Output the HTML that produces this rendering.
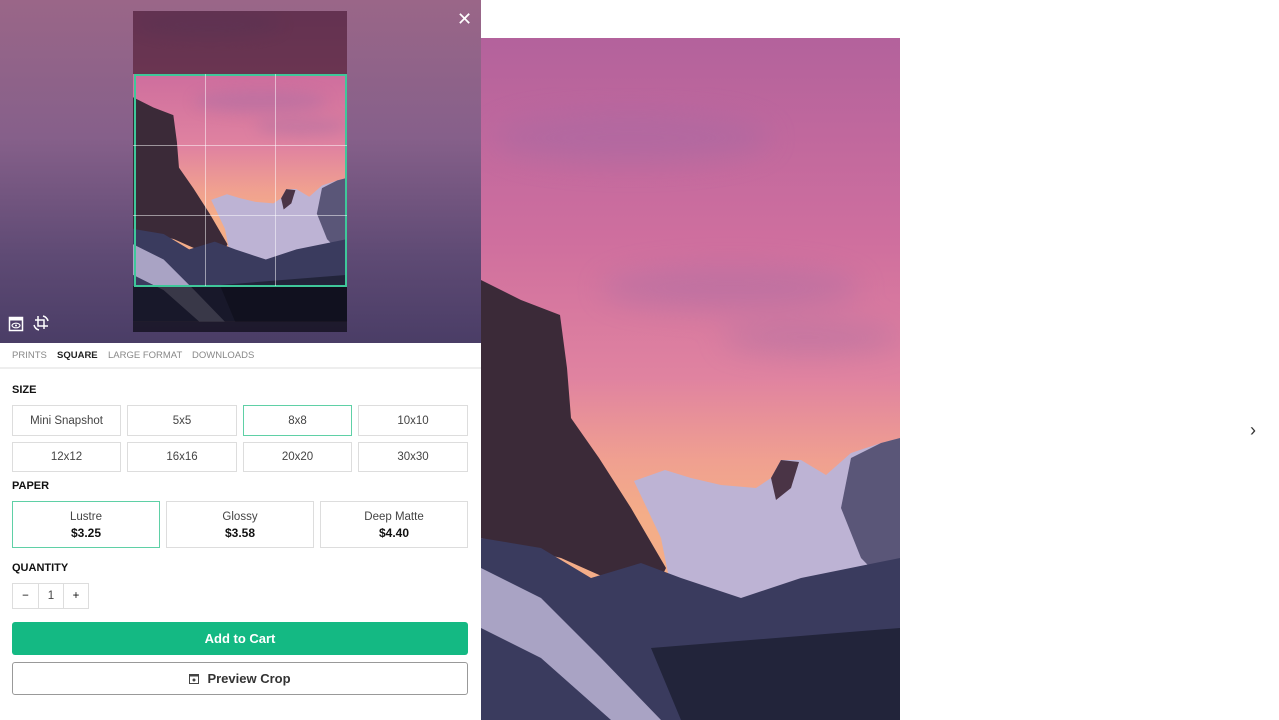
<!DOCTYPE html>
<html><head><meta charset="utf-8"><style>
*{box-sizing:border-box;margin:0;padding:0}
body{width:1279px;height:720px;overflow:hidden;background:#fff;font-family:"Liberation Sans",sans-serif;position:relative;color:#222}
.top{position:absolute;left:0;top:0;width:481px;height:343px;background:linear-gradient(180deg,#9a6688 0%,#86608a 40%,#5e4a74 75%,#4a3d66 100%)}
.thumb{position:absolute;left:133px;top:11px;width:214px;height:321px;overflow:hidden}
.photo{position:absolute;left:481px;top:38px;width:419px;height:682px}
.tabs{position:absolute;left:0;top:343px;width:481px;height:26px;border-bottom:2px solid #eee;font-size:9.5px;color:#888}
.tabs span{position:absolute;top:7px}
.lbl{position:absolute;left:12px;font-size:11px;font-weight:bold;color:#111}
.b{position:absolute;border:1px solid #ddd;background:#fff;font-size:11.5px;color:#444;display:flex;align-items:center;justify-content:center;flex-direction:column;line-height:16px}
.b strong{color:#111;font-size:12px}
</style></head><body>
<svg width="0" height="0" style="position:absolute">
<defs>
<linearGradient id="sky" x1="0" y1="0" x2="0" y2="1">
<stop offset="0" stop-color="#b3629c"/><stop offset=".3" stop-color="#cf6f9e"/><stop offset=".5" stop-color="#e083a0"/><stop offset=".62" stop-color="#f0a090"/><stop offset=".7" stop-color="#f4ad88"/></linearGradient>
<filter id="bl"><feGaussianBlur stdDeviation="14"/></filter>
<symbol id="scene" viewBox="0 0 419 682" preserveAspectRatio="none">
<rect width="419" height="682" fill="url(#sky)"/>
<g filter="url(#bl)" fill="#9a6aa6" opacity=".35">
<ellipse cx="250" cy="250" rx="130" ry="22"/><ellipse cx="330" cy="300" rx="90" ry="16"/><ellipse cx="150" cy="100" rx="140" ry="26"/>
</g>
<path d="M0 242 L40 262 L79 277 L86 330 L90 380 L118 420 L150 470 L185 530 L170 560 L80 520 L0 500Z" fill="#3b2a38"/>
<path d="M153 443 L184 432 L210 440 L240 447 L275 450 L290 440 L300 422 L320 422 L345 437 L370 415 L400 405 L419 400 L419 600 L200 600 L180 500Z" fill="#bdb3d4"/>
<path d="M290 440 L300 422 L318 424 L310 450 L295 462Z" fill="#4a3446"/>
<path d="M370 420 L400 405 L419 400 L419 560 L380 520 L360 470Z" fill="#5a5678"/>
<path d="M0 500 L60 510 L110 540 L160 525 L200 540 L260 560 L320 540 L419 520 L419 682 L0 682Z" fill="#3a3b5e"/>
<path d="M0 530 L60 560 L120 620 L180 682 L130 682 L60 620 L0 590Z" fill="#a9a3c4"/>
<path d="M170 610 L419 590 L419 682 L200 682Z" fill="#22243a"/>
</symbol>
</defs></svg>
<div class="top">
<div class="thumb">
<svg width="214" height="321" viewBox="0 73 419 629" preserveAspectRatio="none"><use href="#scene" x="0" y="0" width="419" height="682"/></svg>
<div style="position:absolute;left:0;top:0;width:214px;height:63px;background:rgba(40,15,30,.6)"></div>
<div style="position:absolute;left:0;top:275px;width:214px;height:46px;background:rgba(10,10,20,.7)"></div>
<div style="position:absolute;left:1px;top:63px;width:213px;height:213px;border:2px solid #3fc79a"></div>
<div style="position:absolute;left:72px;top:63px;width:1px;height:212px;background:rgba(255,255,255,.5)"></div>
<div style="position:absolute;left:142px;top:63px;width:1px;height:212px;background:rgba(255,255,255,.5)"></div>
<div style="position:absolute;left:0;top:134px;width:214px;height:1px;background:rgba(255,255,255,.5)"></div>
<div style="position:absolute;left:0;top:204px;width:214px;height:1px;background:rgba(255,255,255,.5)"></div>
</div>
<div style="position:absolute;left:457px;top:9px;color:#fff;font-size:18px">✕</div>
<svg style="position:absolute;left:8px;top:316px" width="16" height="16" viewBox="0 0 16 16"><rect x="1.5" y="1.5" width="13" height="13" fill="none" stroke="#fff" stroke-width="1.5"/><rect x="1.5" y="1.5" width="13" height="3" fill="#fff"/><ellipse cx="8" cy="9.5" rx="4" ry="2.3" fill="none" stroke="#fff" stroke-width="1.2"/><circle cx="8" cy="9.5" r="1" fill="#fff"/></svg>
<svg style="position:absolute;left:31px;top:313px" width="20" height="20" viewBox="0 0 20 20" fill="none" stroke="#fff" stroke-width="1.5"><path d="M7 3v10h10M4 7h9v9"/><path d="M3 12a7 7 0 0 0 5 5M17 8a7 7 0 0 0-5-5"/></svg>
</div>
<svg class="photo" viewBox="0 0 419 682" preserveAspectRatio="none"><use href="#scene" x="0" y="0" width="419" height="682"/></svg>
<div style="position:absolute;left:1250px;top:420px;font-size:18px;color:#333">›</div>
<div class="tabs"><span style="left:12px">PRINTS</span><span style="left:57px;color:#222;font-weight:bold">SQUARE</span><span style="left:108px">LARGE FORMAT</span><span style="left:192px">DOWNLOADS</span></div>
<div class="lbl" style="top:384px">SIZE</div>
<div class="b" style="left:12px;top:405px;width:109px;height:31px">Mini Snapshot</div>
<div class="b" style="left:127px;top:405px;width:110px;height:31px">5x5</div>
<div class="b" style="left:243px;top:405px;width:109px;height:31px;border-color:#5fd0a6">8x8</div>
<div class="b" style="left:358px;top:405px;width:110px;height:31px">10x10</div>
<div class="b" style="left:12px;top:442px;width:109px;height:30px">12x12</div>
<div class="b" style="left:127px;top:442px;width:110px;height:30px">16x16</div>
<div class="b" style="left:243px;top:442px;width:109px;height:30px">20x20</div>
<div class="b" style="left:358px;top:442px;width:110px;height:30px">30x30</div>
<div class="lbl" style="top:480px">PAPER</div>
<div class="b" style="left:12px;top:501px;width:148px;height:47px;border-color:#5fd0a6">Lustre<strong>$3.25</strong></div>
<div class="b" style="left:166px;top:501px;width:148px;height:47px">Glossy<strong>$3.58</strong></div>
<div class="b" style="left:320px;top:501px;width:148px;height:47px">Deep Matte<strong>$4.40</strong></div>
<div class="lbl" style="top:562px">QUANTITY</div>
<div class="b" style="left:12px;top:583px;width:27px;height:26px;color:#111">−</div>
<div class="b" style="left:38px;top:583px;width:26px;height:26px">1</div>
<div class="b" style="left:63px;top:583px;width:26px;height:26px;color:#111">+</div>
<div style="position:absolute;left:12px;top:622px;width:456px;height:33px;background:#14b983;border-radius:3px;color:#fff;font-weight:bold;font-size:13px;display:flex;align-items:center;justify-content:center">Add to Cart</div>
<div style="position:absolute;left:12px;top:662px;width:456px;height:33px;border:1px solid #999;border-radius:3px;color:#333;font-weight:bold;font-size:13px;display:flex;align-items:center;justify-content:center"><svg width="10" height="10" viewBox="0 0 10 10" style="margin-right:8px"><rect x=".5" y=".5" width="9" height="9" fill="none" stroke="#444"/><rect x=".5" y=".5" width="9" height="2" fill="#444"/><circle cx="5" cy="6" r="1.5" fill="#444"/></svg>Preview Crop</div>
</body></html>
